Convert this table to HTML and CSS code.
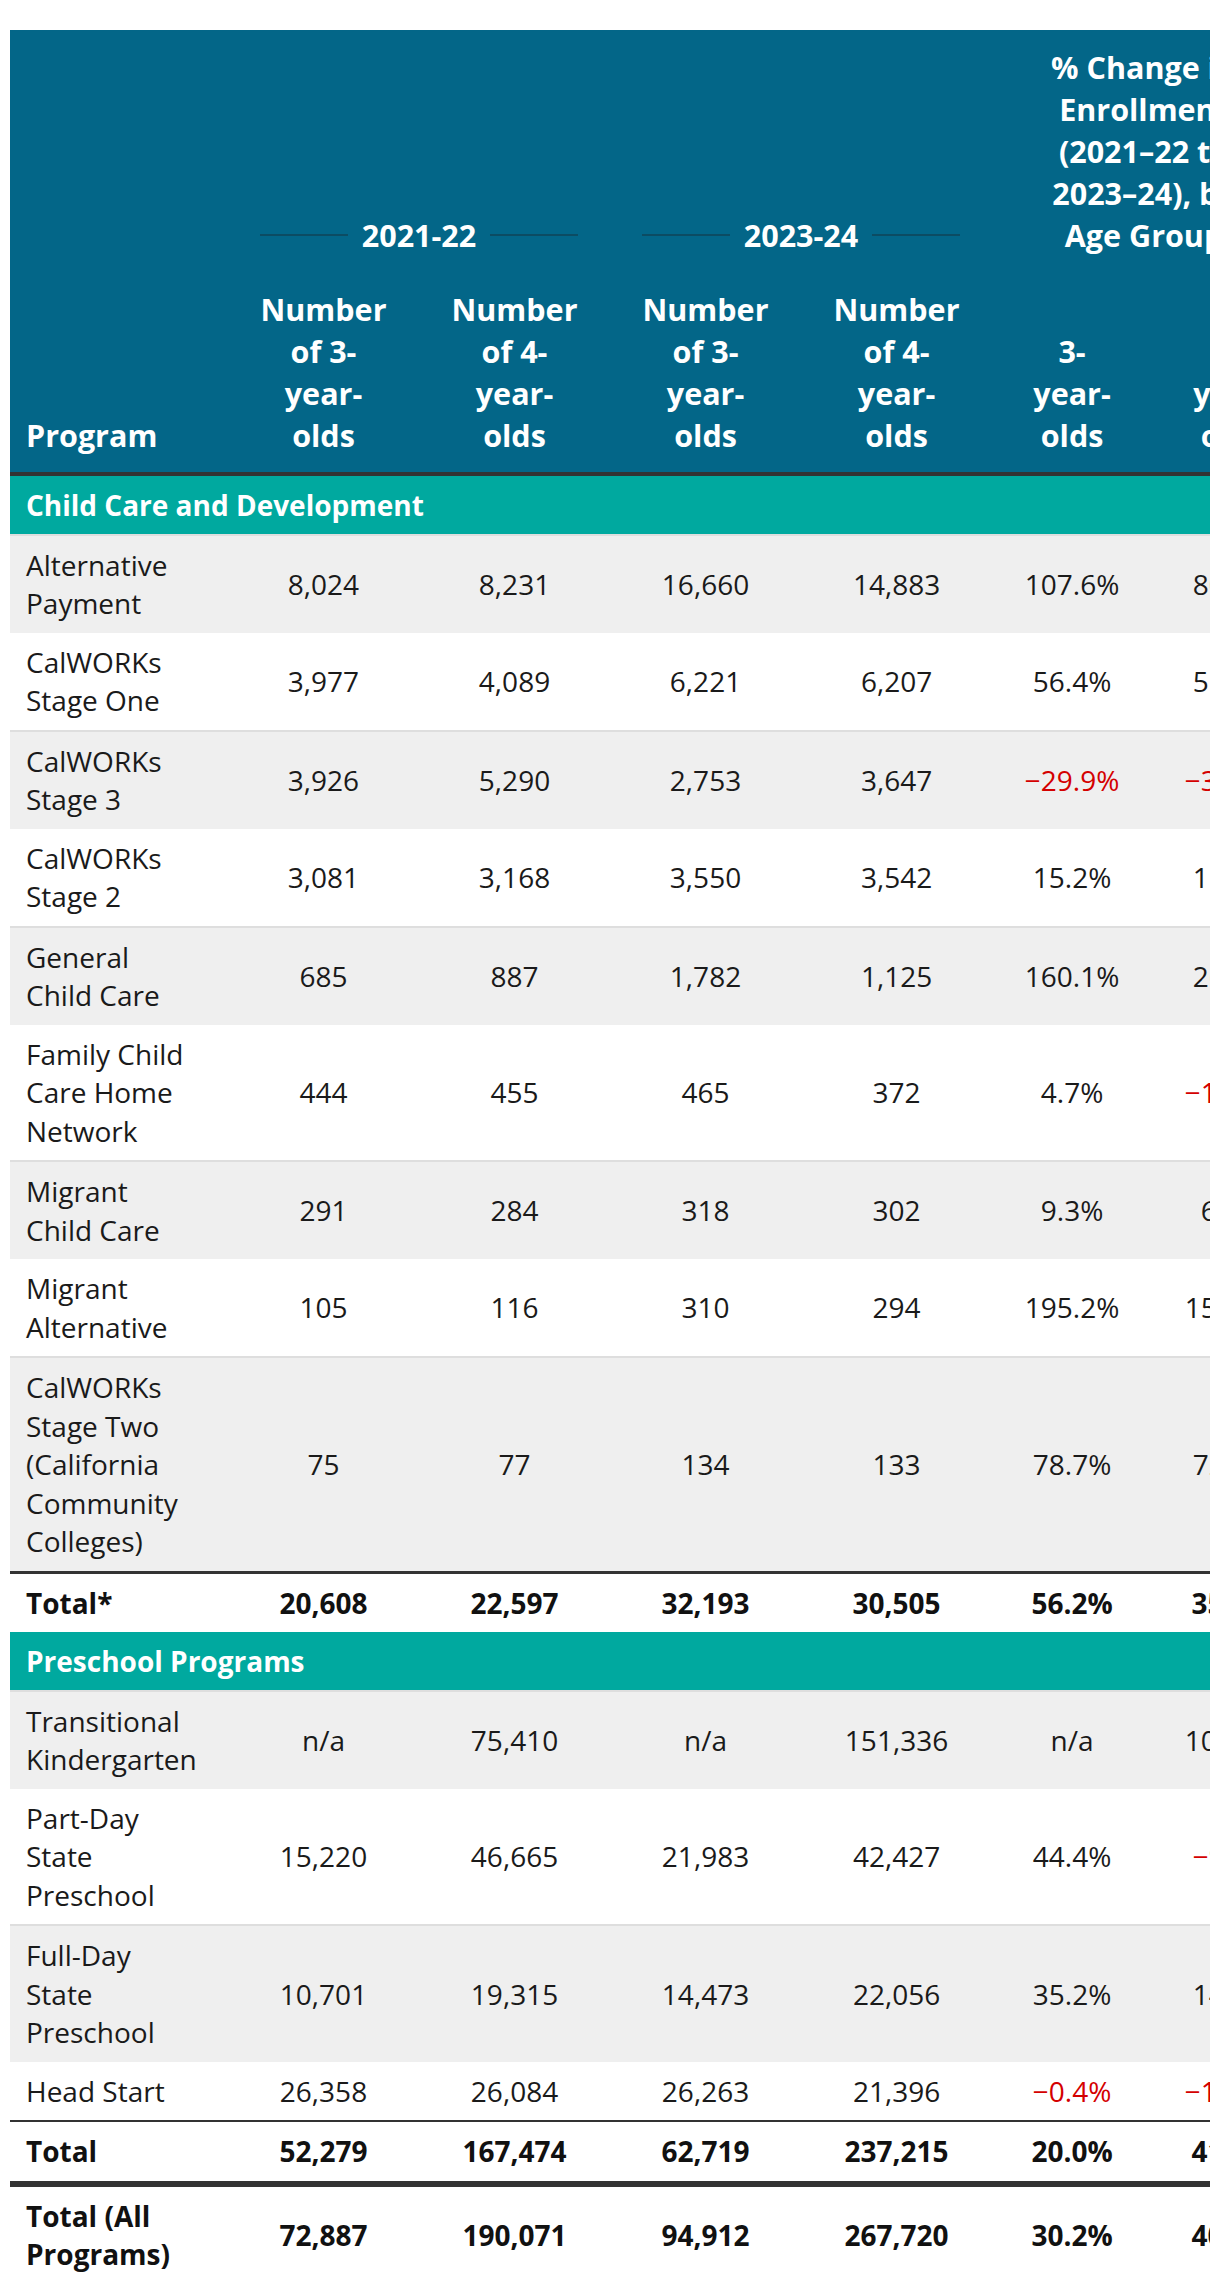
FILE: index.html
```html
<!DOCTYPE html>
<html lang="en">
<head>
<meta charset="utf-8">
<title>Enrollment by Program</title>
<link rel="stylesheet" href="styles.css">
</head>
<body>
<div class="table-wrap">
<table class="enroll">
<colgroup>
<col class="c-prog">
<col class="c-num"><col class="c-num"><col class="c-num"><col class="c-num">
<col class="c-pct"><col class="c-pct">
</colgroup>
<thead>
<tr>
<th rowspan="2" class="th-prog">Program</th>
<th colspan="2" class="th-group"><div class="group"><span>2021-22</span></div></th>
<th colspan="2" class="th-group"><div class="group"><span>2023-24</span></div></th>
<th colspan="2" class="th-change">% Change in Enrollment (2021–22 to 2023–24), by Age Group</th>
</tr>
<tr class="sub">
<th>Number of 3-year-olds</th>
<th>Number of 4-year-olds</th>
<th>Number of 3-year-olds</th>
<th>Number of 4-year-olds</th>
<th class="pct">3-year-olds</th>
<th class="pct">4-year-olds</th>
</tr>
</thead>
<tbody>
<tr class="section"><td colspan="7">Child Care and Development</td></tr>
<tr class="alt"><td class="name">Alternative Payment</td><td>8,024</td><td>8,231</td><td>16,660</td><td>14,883</td><td>107.6%</td><td>80.8%</td></tr>
<tr><td class="name">CalWORKs Stage One</td><td>3,977</td><td>4,089</td><td>6,221</td><td>6,207</td><td>56.4%</td><td>51.8%</td></tr>
<tr class="alt"><td class="name">CalWORKs Stage 3</td><td>3,926</td><td>5,290</td><td>2,753</td><td>3,647</td><td class="neg">−29.9%</td><td class="neg">−31.1%</td></tr>
<tr><td class="name">CalWORKs Stage 2</td><td>3,081</td><td>3,168</td><td>3,550</td><td>3,542</td><td>15.2%</td><td>11.8%</td></tr>
<tr class="alt"><td class="name">General Child Care</td><td>685</td><td>887</td><td>1,782</td><td>1,125</td><td>160.1%</td><td>26.8%</td></tr>
<tr><td class="name">Family Child Care Home Network</td><td>444</td><td>455</td><td>465</td><td>372</td><td>4.7%</td><td class="neg">−18.2%</td></tr>
<tr class="alt"><td class="name">Migrant Child Care</td><td>291</td><td>284</td><td>318</td><td>302</td><td>9.3%</td><td>6.3%</td></tr>
<tr><td class="name">Migrant Alternative</td><td>105</td><td>116</td><td>310</td><td>294</td><td>195.2%</td><td>153.4%</td></tr>
<tr class="alt"><td class="name">CalWORKs Stage Two (California Community Colleges)</td><td>75</td><td>77</td><td>134</td><td>133</td><td>78.7%</td><td>72.7%</td></tr>
<tr class="total total-sub"><td class="name">Total*</td><td>20,608</td><td>22,597</td><td>32,193</td><td>30,505</td><td>56.2%</td><td>35.0%</td></tr>
<tr class="section"><td colspan="7">Preschool Programs</td></tr>
<tr class="alt"><td class="name">Transitional Kindergarten</td><td>n/a</td><td>75,410</td><td>n/a</td><td>151,336</td><td>n/a</td><td>100.7%</td></tr>
<tr><td class="name">Part-Day State Preschool</td><td>15,220</td><td>46,665</td><td>21,983</td><td>42,427</td><td>44.4%</td><td class="neg">−9.1%</td></tr>
<tr class="alt"><td class="name">Full-Day State Preschool</td><td>10,701</td><td>19,315</td><td>14,473</td><td>22,056</td><td>35.2%</td><td>14.2%</td></tr>
<tr><td class="name">Head Start</td><td>26,358</td><td>26,084</td><td>26,263</td><td>21,396</td><td class="neg">−0.4%</td><td class="neg">−18.0%</td></tr>
<tr class="total total-pre"><td class="name">Total</td><td>52,279</td><td>167,474</td><td>62,719</td><td>237,215</td><td>20.0%</td><td>41.6%</td></tr>
<tr class="total total-all"><td class="name">Total (All Programs)</td><td>72,887</td><td>190,071</td><td>94,912</td><td>267,720</td><td>30.2%</td><td>40.9%</td></tr>
</tbody>
</table>
</div>
</body>
</html>
```

FILE: styles.css
```css
* {
  box-sizing: border-box;
}

body {
  margin: 0;
  background: #ffffff;
  font-family: "Open Sans", "Noto Sans", Arial, sans-serif;
  color: #1a1a1a;
}

.table-wrap {
  margin: 30px 10px 0;
  overflow: hidden;
}

.enroll {
  border-collapse: collapse;
  table-layout: fixed;
  width: 1302px;
  font-size: 28px;
  line-height: 38.5px;
}

.c-prog { width: 218px; }
.c-num { width: 191px; }
.c-pct { width: 160px; }

/* ---------- header ---------- */
.enroll thead th {
  background: #036688;
  color: #ffffff;
  font-size: 30.5px;
  font-weight: 700;
  line-height: 42px;
  padding: 16px 30px;
  text-align: center;
  vertical-align: bottom;
}

.enroll thead tr.sub th,
.enroll thead th.th-prog {
  border-bottom: 4px solid #333333;
}

.enroll thead th.th-prog {
  text-align: left;
  padding-left: 16px;
  padding-right: 16px;
}

.enroll thead th.th-group {
  padding-left: 32px;
  padding-right: 32px;
}

.enroll thead th.pct {
  padding-left: 34px;
  padding-right: 34px;
}

.enroll thead th.th-change {
  padding-left: 37px;
  padding-right: 53px;
}

.group {
  display: flex;
  align-items: center;
  gap: 14px;
}

.group::before,
.group::after {
  content: "";
  flex: 1;
  height: 2px;
  background: #0c4c63;
}

/* ---------- body ---------- */
.enroll tbody td {
  padding: 10px 16px;
  text-align: center;
  vertical-align: middle;
}

.enroll tbody td.name {
  text-align: left;
  padding-right: 40px;
}

.enroll tbody tr.alt td {
  background: #efefef;
  border-top: 2px solid #dedede;
}

.enroll tbody tr.section td {
  background: #00a99f;
  color: #ffffff;
  font-weight: 700;
  text-align: left;
  padding: 10px 16px 9px;
}

.enroll tbody td.neg {
  color: #d40000;
}

.enroll tbody tr.total td {
  font-weight: 700;
  color: #111111;
}

.enroll tbody tr.total-sub td {
  border-top: 3px solid #333333;
}

.enroll tbody tr.total-pre td {
  border-top: 2px solid #333333;
}

.enroll tbody tr.total-all td {
  border-top: 6px solid #333333;
}
```
